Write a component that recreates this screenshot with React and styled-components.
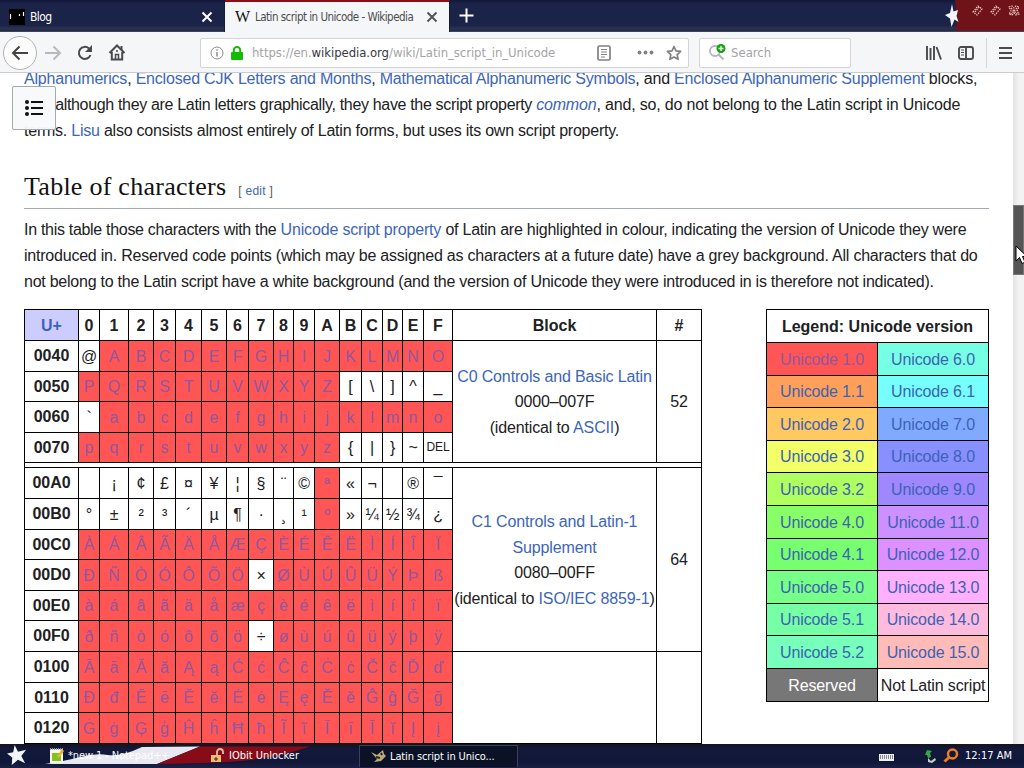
import React from 'react';
import styled, { createGlobalStyle } from 'styled-components';

const GlobalStyle = createGlobalStyle`
  * {
    box-sizing: border-box;
  }

  body {
    margin: 0;
    overflow: hidden;
    background: #fff;
    font-family: "Liberation Sans", Arial, sans-serif;
  }

  svg {
    display: block;
    flex: none;
  }
`;

const uiFont = '"DejaVu Sans Condensed", "Noto Sans", sans-serif';

const Screen = styled.div`
  width: 1024px;
  height: 768px;
  display: flex;
  flex-direction: column;
  overflow: hidden;
  position: relative;
`;

/* ---------- browser chrome ---------- */

const TitleBar = styled.div`
  height: 32px;
  flex: none;
  display: flex;
  background: linear-gradient(#10173a 0, #1c2348 4px, #1b2348 26px, #2b3350 28px, #222a48 31px, #555c72 32px);
`;

const Tab = styled.div`
  width: ${props => props.$width};
  height: 32px;
  padding: ${props => (props.$active ? '0 11px 0 10px' : '0 11px 0 9px')};
  display: flex;
  align-items: center;
  gap: 5px;
  font: 12px ${uiFont};
  color: ${props => (props.$active ? '#4c4c50' : '#fff')};
  background: ${props => (props.$active ? '#f5f6f7' : 'transparent')};
  border-top: ${props => (props.$active ? '2px solid #8c0d18' : '2px solid transparent')};
  border-right: 1px solid #131a3c;

  svg:last-child {
    margin-left: auto;
  }
`;

const TabTitle = styled.span`
  white-space: nowrap;
  font-size: ${props => props.$size || '12px'};
  letter-spacing: ${props => props.$spacing || 0};
`;

const WikiIcon = styled.span`
  width: 15px;
  font: 16px/20px "Liberation Serif", serif;
  color: #111;
`;

const NewTab = styled.div`
  padding: 8px 0 0 9px;
`;

const WindowControls = styled.div`
  margin-left: auto;
  width: 80px;
  height: 31px;
`;

const ToolBar = styled.div`
  height: 41px;
  flex: none;
  display: flex;
  align-items: center;
  background: #f5f6f7;
  border-bottom: 1px solid #ccc;
  padding: 1px 12px 0 3px;
`;

const BackButton = styled.div`
  width: 34px;
  height: 34px;
  border: 1px solid #b4b4b4;
  border-radius: 50%;
  background: #fcfcfc;
  display: flex;
  align-items: center;
  justify-content: center;
`;

const NavIcons = styled.div`
  display: flex;
  align-items: center;
  gap: 14px;
  margin-left: 7px;
  width: 156px;
`;

const Field = styled.div`
  width: ${props => props.$width};
  height: 30px;
  margin-right: ${props => props.$after || 0};
  padding: 0 7px 0 9px;
  display: flex;
  align-items: center;
  background: #fff;
  border: 1px solid #d4d4d6;
  border-radius: 2px;
  font: 13px ${uiFont};
  color: #a4a4a6;
`;

const Url = styled.span`
  margin-left: 7px;
  width: 345px;
  white-space: nowrap;
  letter-spacing: -0.06px;

  b {
    font-weight: normal;
    color: #38383d;
  }
`;

const FieldEnd = styled.div`
  display: flex;
  align-items: center;
  gap: ${props => props.$gap};
  margin-left: ${props => props.$left || 0};
`;

const ToolEnd = styled.div`
  margin-left: auto;
  display: flex;
  align-items: center;
  gap: 16px;
`;

const MenuButton = styled.div`
  height: 30px;
  padding-left: 12px;
  margin-left: -4px;
  border-left: 1px solid #d5d5d7;
  display: flex;
  align-items: center;
`;

/* ---------- article ---------- */

const Viewport = styled.div`
  height: 671px;
  flex: none;
  overflow: hidden;
  display: flex;
`;

const Article = styled.div`
  width: 1013px;
  padding-left: 24px;
  margin-top: -7px;
  color: #202122;
`;

const Line = styled.div`
  height: 26px;
  line-height: 26px;
  font-size: 16px;
  white-space: nowrap;
  letter-spacing: ${props => props.$spacing || 0};
`;

const Run = styled.span`
  letter-spacing: ${props => props.$spacing};
`;

const Link = styled.a`
  color: #3c66b8;
`;

const Heading = styled.h2`
  margin: 28px 0 8px;
  width: 965px;
  height: 37px;
  display: flex;
  align-items: baseline;
  gap: 12px;
  border-bottom: 1px solid #a2a9b1;
  font: 26px/30px "Liberation Serif", Georgia, serif;
  color: #111;
  letter-spacing: 0.26px;

  span {
    font: 12px "Liberation Sans", sans-serif;
    letter-spacing: 0.25px;
    color: #54595d;
  }
`;

const Tables = styled.div`
  display: flex;
  align-items: flex-start;
  justify-content: space-between;
  width: 965px;
  margin-top: 14px;
`;

const Table = styled.table`
  width: ${props => props.$width};
  table-layout: fixed;
  border-collapse: separate;
  border-spacing: 0;
  border: 0 solid #000;
  border-width: 1px 0 0 1px;
  font-size: 16px;
  text-align: center;

  th,
  td {
    padding: 0;
    border: 0 solid #000;
    border-width: 0 1px 1px 0;
    white-space: nowrap;
  }

  td,
  tr:first-child th {
    padding-top: 1px;
  }

  td {
    letter-spacing: -0.14px;
  }
`;

const Row = styled.tr`
  height: ${props => props.$height}px;
  line-height: ${props => Math.min(25.5, props.$height - 1)}px;
`;

const CornerCell = styled.th`
  background: #ccccff;
  color: #3c62b4;
`;

const CharCell = styled.td`
  background: ${props => (props.$latin ? '#ff5555' : '#fff')};
  color: ${props => (props.$latin ? '#90589e' : '#202122')};
  font-size: ${props => (props.$small ? '12px' : '16px')};
`;

const VersionCell = styled.td`
  background: ${props => props.$bg};
  color: ${props => props.$color || '#3c62b4'};
`;

const ScrollBar = styled.div`
  width: 11px;
  height: 671px;
  padding-top: 132px;
  background: linear-gradient(90deg, #e2e2e2, #f3f3f3 6px);
`;

const Thumb = styled.div`
  height: 70px;
  background: #555;
  border: 1px solid #777;
`;

const TocButton = styled.div`
  position: absolute;
  left: 12px;
  top: 86px;
  width: 44px;
  height: 44px;
  display: flex;
  align-items: center;
  justify-content: center;
  background: rgba(248, 249, 250, 0.97);
  border: 1px solid #a2a9b1;
  border-radius: 2px;
`;

const Pointer = styled.svg`
  position: absolute;
  left: 1015px;
  top: 245px;
`;

/* ---------- taskbar ---------- */

const TaskBar = styled.div`
  height: 24px;
  flex: none;
  position: relative;
  display: flex;
  align-items: center;
  background: linear-gradient(#15151f, #12193a 5px, #101738 18px, #1a2145);
  padding-bottom: 1px;
  color: #fff;
  font: 11px ${uiFont};
`;

const Flag = styled.svg`
  position: absolute;
  left: 0;
  top: 0;
`;

const Start = styled.div`
  position: relative;
  width: 49px;
  padding-left: 7px;
`;

const Task = styled.div`
  position: relative;
  width: ${props => props.$width};
  height: 22px;
  display: flex;
  align-items: center;
  gap: 4px;
  white-space: nowrap;
  letter-spacing: ${props => props.$spacing || 0};
  ${props => props.$active && `
    padding-left: 11px;
    border: 1px solid #3a4058;
    border-bottom: 0;
    background: #0c1226;
  `}
`;

const Tray = styled.div`
  position: relative;
  margin-left: auto;
  padding-right: 12px;
  display: flex;
  align-items: center;
  gap: 6px;
`;

const Gap = styled.span`
  width: ${props => props.$width};
`;

const WIDTHS = [54, 21, 29, 25, 22, 26, 25, 22, 25, 20, 21, 25, 22, 21, 20, 21, 29, 204, 45];
const HEX = '0123456789ABCDEF'.split('');

// `plain` lists the columns whose character is not Latin
const ASCII_ROWS = [
  { code: 0x40, height: 31, plain: '0' },
  { code: 0x50, height: 30, plain: 'BCDEF' },
  { code: 0x60, height: 31, plain: '0' },
  { code: 0x70, height: 30, plain: 'BCDEF' },
];
const LATIN1_ROWS = [
  { code: 0xa0, height: 31, plain: '0123456789BCDEF' },
  { code: 0xb0, height: 31, plain: '0123456789BCDEF' },
  { code: 0xc0, height: 30, plain: '' },
  { code: 0xd0, height: 31, plain: '7' },
  { code: 0xe0, height: 30, plain: '' },
  { code: 0xf0, height: 31, plain: '7' },
];
const EXTENDED_ROWS = [
  { code: 0x100, height: 31, plain: '' },
  { code: 0x110, height: 30, plain: '' },
  { code: 0x120, height: 31, plain: '' },
];

const VERSIONS = [
  ['1.0', '#ff5555', '6.0', '#77ffe6', 33],
  ['1.1', '#ffa05a', '6.1', '#77ffff', 32],
  ['2.0', '#ffc860', '7.0', '#80aaff', 33],
  ['3.0', '#f2ff66', '8.0', '#8890ff', 32],
  ['3.2', '#afff60', '9.0', '#9f88ff', 33],
  ['4.0', '#88ff66', '11.0', '#cc90ff', 33],
  ['4.1', '#77ff70', '12.0', '#dd90ff', 32],
  ['5.0', '#77ff88', '13.0', '#ffb0ff', 33],
  ['5.1', '#77ffa6', '14.0', '#ffbbdd', 32],
  ['5.2', '#77ffbb', '15.0', '#ffbbb8', 33],
];

const label = code => code.toString(16).toUpperCase().padStart(4, '0');

const Star = ({ size = 22 }) => (
  <svg width={size} height={size} viewBox="0 0 22 22">
    <path d="M8 0l3.500 7L20 5l-5 6.500L19 19l-7.500-3.500L5 21l.5-8L0 9l6.500-1.500z" fill="#f4f5fa"/>
  </svg>
);

const Close = ({ color }) => (
  <svg width="12" height="12" viewBox="0 0 12 12" stroke={color} strokeWidth="2">
    <path d="M1.500 1.500l9 9M10.500 1.500l-9 9"/>
  </svg>
);

const CharRows = ({ rows, block, count }) => rows.map((row, i) => (
  <Row key={row.code} $height={row.height}>
    <th>{label(row.code)}</th>
    {HEX.map((digit, n) => {
      const code = row.code + n;
      return (
        <CharCell key={digit} $latin={!row.plain.includes(digit)} $small={code === 0x7f}>
          {code === 0x7f ? 'DEL' : code === 0xad ? '' : String.fromCharCode(code)}
        </CharCell>
      );
    })}
    {i === 0 && <td rowSpan={rows.length}>{block}</td>}
    {i === 0 && <td rowSpan={rows.length}>{count}</td>}
  </Row>
));

const CharTable = () => (
  <Table $width="678px">
    <colgroup>
      {WIDTHS.map((w, i) => <col key={i} width={w}/>)}
    </colgroup>
    <tbody>
      <Row $height={31}>
        <CornerCell>U+</CornerCell>
        {HEX.map(digit => <th key={digit}>{digit}</th>)}
        <th>Block</th>
        <th>#</th>
      </Row>
      <CharRows
        rows={ASCII_ROWS}
        block={<><Link>C0 Controls and Basic Latin</Link><br/>0000–007F<br/>(identical to <Link>ASCII</Link>)</>}
        count="52"
      />
      <Row $height={5}><td colSpan={19}/></Row>
      <CharRows
        rows={LATIN1_ROWS}
        block={<><Link>C1 Controls and Latin-1<br/>Supplement</Link><br/>0080–00FF<br/>(identical to <Link>ISO/IEC 8859-1</Link>)</>}
        count="64"
      />
      <CharRows rows={EXTENDED_ROWS} block="" count=""/>
    </tbody>
  </Table>
);

const Legend = () => (
  <Table $width="223px">
    <colgroup>
      <col width="111"/>
      <col width="111"/>
    </colgroup>
    <tbody>
      <Row $height={33}><th colSpan={2}>Legend: Unicode version</th></Row>
      {VERSIONS.map(([left, leftBg, right, rightBg, height]) => (
        <Row key={left} $height={height}>
          <VersionCell $bg={leftBg} $color={left === '1.0' ? '#90589e' : undefined}>Unicode {left}</VersionCell>
          <VersionCell $bg={rightBg}>Unicode {right}</VersionCell>
        </Row>
      ))}
      <Row $height={33}>
        <VersionCell $bg="#777" $color="#fff">Reserved</VersionCell>
        <VersionCell $bg="#fff" $color="#202122">Not Latin script</VersionCell>
      </Row>
    </tbody>
  </Table>
);

const Tabs = () => (
  <TitleBar>
    <Tab $width="225px">
      <svg width="16" height="16" viewBox="0 0 16 16">
        <rect width="16" height="16" fill="#000"/>
        <path d="M1.500 5v5M10.500 5v2M14.500 3v4" stroke="#fff" strokeWidth="1.200"/>
      </svg>
      <TabTitle $spacing="-0.6px">Blog</TabTitle>
      <Close color="#fff"/>
    </Tab>
    <Tab $width="225px" $active>
      <WikiIcon>W</WikiIcon>
      <TabTitle $size="11.500px" $spacing="-0.52px">Latin script in Unicode - Wikipedia</TabTitle>
      <Close color="#55555a"/>
    </Tab>
    <NewTab>
      <svg width="15" height="15" viewBox="0 0 15 15" stroke="#fff" strokeWidth="2">
        <path d="M7.500 0.500v14M0.500 7.500h14"/>
      </svg>
    </NewTab>
    <WindowControls>
      <svg width="80" height="31" viewBox="0 0 80 31">
        <path d="M11 0h69v31H11l2-8z" fill="#701318"/>
        <path d="M8 4l1.500 7.500L14 10l-1.500 6 2 6-4-2.500L7.500 27 6 18.500 1 15l5-2z" fill="#f4f5fa"/>
        <g fill="none" stroke="#e5c4bd" strokeWidth="1.200" strokeDasharray="1.500 1">
          <path d="M29 12l5-6 4 3-5 6zM31 12l4-5"/>
          <path d="M47 12l5-6 4 3-5 6zM49 12l4-5"/>
          <path d="M65 7l3-1 2 2 2-2 3 1-2 4 2 3-3 1-2-2-2 2-3-1 2-3zM67 8l6 6M73 8l-6 6"/>
        </g>
      </svg>
    </WindowControls>
  </TitleBar>
);

const Navigation = () => (
  <ToolBar>
    <BackButton>
      <svg width="18" height="16" viewBox="0 0 18 16" fill="none" stroke="#444" strokeWidth="2">
        <path d="M17 8H2M8.500 1.500L2 8l6.500 6.500"/>
      </svg>
    </BackButton>
    <NavIcons>
      <svg width="18" height="16" viewBox="0 0 18 16" fill="none" stroke="#b9b9bb" strokeWidth="2">
        <path d="M1 8h15M9.500 1.500L16 8l-6.500 6.500"/>
      </svg>
      <svg width="18" height="16" viewBox="0 0 18 16" fill="none" stroke="#4a4a4c" strokeWidth="2">
        <path d="M13 3.500A6 6 0 1 0 14.500 10"/>
        <path d="M16 0v7H9z" fill="#4a4a4c" stroke="none"/>
      </svg>
      <svg width="18" height="17" viewBox="0 0 18 17" fill="none" stroke="#4a4a4c" strokeWidth="2">
        <path d="M1.500 9L9 1.500 16.500 9M3.800 8v7.500h10.400V8"/>
        <path d="M7.500 15.500v-5h3v5M8 7h2" strokeWidth="1.500"/>
        <path d="M13.500 2v4"/>
      </svg>
    </NavIcons>
    <Field $width="489px" $after="10px">
      <svg width="14" height="14" viewBox="0 0 14 14" fill="none" stroke="#8c8c8e">
        <circle cx="7" cy="7" r="6"/>
        <path d="M7 6v4.500M7 3.200v1.600" strokeWidth="1.500"/>
      </svg>
      <FieldEnd $left="7px">
        <svg width="12" height="14" viewBox="0 0 12 14">
          <rect y="6" width="12" height="8" rx="1" fill="#12bc00"/>
          <path d="M2.800 7V4.200a3.200 3.200 0 0 1 6.400 0V7" fill="none" stroke="#12bc00" strokeWidth="2"/>
        </svg>
      </FieldEnd>
      <FieldEnd $left="2px">
        <Url>https://en.<b>wikipedia.org</b>/wiki/Latin_script_in_Unicode</Url>
      </FieldEnd>
      <svg width="14" height="16" viewBox="0 0 14 16" fill="none" stroke="#818184">
        <rect x="1" y="1" width="12" height="14" rx="1.500" strokeWidth="1.700"/>
        <path d="M4 4.500h6M4 7h6M4 9.500h6M4 12h4"/>
      </svg>
      <FieldEnd $gap="12px" $left="26px">
        <svg width="17" height="5" viewBox="0 0 17 5" fill="#818184">
          <circle cx="2.500" cy="2.500" r="1.900"/>
          <circle cx="8.500" cy="2.500" r="1.900"/>
          <circle cx="14.500" cy="2.500" r="1.900"/>
        </svg>
        <svg width="16" height="16" viewBox="0 0 16 16" fill="none" stroke="#818184" strokeWidth="1.700">
          <path d="M8 1.500l2 4.300 4.600.6-3.400 3.200.9 4.700L8 12l-4.100 2.300.9-4.700L1.400 6.400 6 5.800z" strokeLinejoin="round"/>
        </svg>
      </FieldEnd>
    </Field>
    <Field $width="152px">
      <svg width="17" height="17" viewBox="0 0 17 17">
        <circle cx="6" cy="7" r="5" fill="none" stroke="#b4b3c6" strokeWidth="1.800"/>
        <path d="M9.500 10.500l5 5" stroke="#b4b3c6" strokeWidth="2"/>
        <circle cx="12" cy="4.500" r="4.500" fill="#12a30a"/>
        <path d="M12 2v5M9.500 4.500h5" stroke="#fff" strokeWidth="1.300"/>
      </svg>
      <FieldEnd $left="5px">Search</FieldEnd>
    </Field>
    <ToolEnd>
      <svg width="16" height="14" viewBox="0 0 16 14" stroke="#4a4a4c" strokeWidth="1.900">
        <path d="M1 0v14M4.500 2v12M8 0v14M10.500 1l4.500 12.500"/>
      </svg>
      <svg width="16" height="14" viewBox="0 0 16 14" fill="none" stroke="#4a4a4c" strokeWidth="1.900">
        <rect x="1" y="1" width="14" height="12" rx="2"/>
        <path d="M8 1v12"/>
        <path d="M3 4h3M3 6.500h3M3 9h3" strokeWidth="1"/>
      </svg>
      <MenuButton>
        <svg width="13" height="12" viewBox="0 0 13 12" stroke="#4a4a4c" strokeWidth="2">
          <path d="M0 1h13M0 6h13M0 11h13"/>
        </svg>
      </MenuButton>
    </ToolEnd>
  </ToolBar>
);

const Tasks = () => (
  <TaskBar>
    <Flag width="330" height="24" viewBox="0 0 330 24">
      <path d="M45 20Q65 17 80 13T108 11 142 3l58-.5L157 20z" fill="#e7e8f2"/>
      <path d="M200 2.500h110q-35 12-75 15-35 2-78 2.500z" fill="#870c17"/>
    </Flag>
    <Start><Star size={21}/></Start>
    <Task $width="161px" $spacing="-0.1px">
      <svg width="15" height="17" viewBox="0 0 15 17">
        <path d="M1 2h13v14H1z" fill="#f7f7ee"/>
        <path d="M3 6h9v8H3z" fill="#83c41c"/>
        <path d="M1 2h13" stroke="#999" strokeWidth="2" strokeDasharray="1 1"/>
        <path d="M8 9l5-7 2 2-5 7z" fill="#e3b52c"/>
      </svg>
      *new 1 - Notepad++
    </Task>
    <Task $width="149px">
      <svg width="15" height="15" viewBox="0 0 15 15">
        <path d="M1 7h10v7H1z" fill="#f0bd78"/>
        <path d="M7 7V4a3 3 0 0 1 6 0v2" fill="none" stroke="#d8c2a2" strokeWidth="1.800"/>
        <path d="M6 9v4M4 11h4" stroke="#4a2412"/>
      </svg>
      IObit Unlocker
    </Task>
    <Task $width="159px" $spacing="-0.12px" $active>
      <svg width="15" height="14" viewBox="0 0 15 14">
        <path d="M0 3l6 3 6-5 1 4 2 2-5 5-7 1 3-3z" fill="#b9a97b"/>
        <path d="M5 8l4 1M10 4l1 2" stroke="#2a2618" strokeWidth="2"/>
      </svg>
      Latin script in Unico...
    </Task>
    <Tray>
      <svg width="15" height="10" viewBox="0 0 15 10">
        <path d="M0 3h15v7H0z" fill="#eee"/>
        <path d="M1 5h13M1 7h13" stroke="#222" strokeDasharray="1 1"/>
      </svg>
      <Gap $width="18px"/>
      <svg width="13" height="14" viewBox="0 0 13 14">
        <path d="M1 6l2-5 5 1-2 2 1 4-3 1-1-3z" fill="#35a744"/>
        <path d="M4 9l3 3 4-3 1 2-4 3-4-1z" fill="#c8cbc9"/>
      </svg>
      <svg width="16" height="15" viewBox="0 0 16 15" fill="none" stroke="#f07c21">
        <circle cx="9.500" cy="6" r="4.500" strokeWidth="2.500"/>
        <path d="M6 9.500l-4.500 4" strokeWidth="3"/>
      </svg>
      12:17 AM
    </Tray>
  </TaskBar>
);

const App = () => (
  <>
    <GlobalStyle/>
    <Screen>
      <Tabs/>
      <Navigation/>
      <Viewport>
        <Article>
          <Line $spacing="-0.205px">
            <Link>Alphanumerics</Link>, <Link>Enclosed CJK Letters and Months</Link>, <Link>Mathematical Alphanumeric Symbols</Link>, and <Link>Enclosed Alphanumeric Supplement</Link> blocks,
          </Line>
          <Line $spacing="-0.18px">
            <Run $spacing="0">but, </Run>
            <Run $spacing="-0.33px">although they are Latin letters graphically, they have the script property </Run>
            <Link><i>common</i></Link>, and, so, do not belong to the Latin script in Unicode
          </Line>
          <Line $spacing="-0.23px">terms. <Link>Lisu</Link> also consists almost entirely of Latin forms, but uses its own script property.</Line>
          <Heading>Table of characters <span>[ <Link>edit</Link> ]</span></Heading>
          <Line $spacing="-0.24px">
            <Run $spacing="-0.3px">In this table those characters with the </Run>
            <Link><Run $spacing="-0.17px">Unicode script property</Run></Link> of Latin are highlighted in colour, indicating the version of Unicode they were
          </Line>
          <Line $spacing="-0.22px">introduced in. Reserved code points (which may be assigned as characters at a future date) have a grey background. All characters that do</Line>
          <Line $spacing="-0.245px">not belong to the Latin script have a white background (and the version of Unicode they were introduced in is therefore not indicated).</Line>
          <Tables>
            <CharTable/>
            <Legend/>
          </Tables>
        </Article>
        <ScrollBar><Thumb/></ScrollBar>
      </Viewport>
      <Tasks/>
      <TocButton>
        <svg width="20" height="16" viewBox="0 0 20 16" stroke="#111" strokeWidth="2">
          <path d="M7 2h12M7 8h12M7 14h12"/>
          <g fill="#111" stroke="none">
            <circle cx="3" cy="2" r="2"/>
            <circle cx="3" cy="8" r="2"/>
            <circle cx="3" cy="14" r="2"/>
          </g>
        </svg>
      </TocButton>
      <Pointer width="12" height="20" viewBox="0 0 12 20">
        <path d="M1 1v15l3.500-3.500L7 18.500l3-1.300-2.500-5.700H12z" fill="#fff" stroke="#000"/>
      </Pointer>
    </Screen>
  </>
);

export default App;
